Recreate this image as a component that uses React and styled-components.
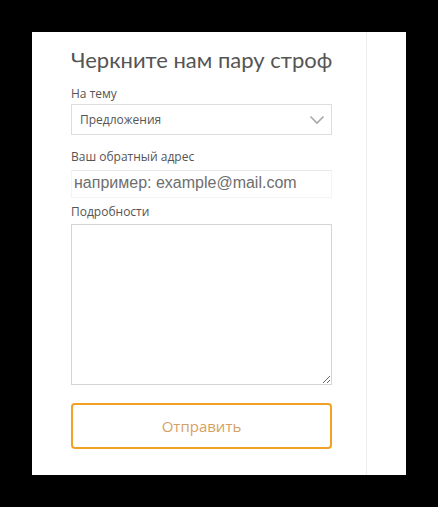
import styled, { createGlobalStyle } from "styled-components";

const GlobalStyle = createGlobalStyle`
  html, body {
    margin: 0;
    padding: 0;
    background: #000000;
  }
  body {
    width: 438px;
    height: 507px;
    overflow: hidden;
  }
`;

const Panel = styled.div`
  margin: 32px 0 0 32px;
  width: 374px;
  height: 443px;
  background: #ffffff;
  display: flex;
`;

const FormColumn = styled.form`
  width: 335px;
  box-sizing: border-box;
  padding: 15px 0 0 39px;
  border-right: 1px solid #eeeeee;
  display: flex;
  flex-direction: column;
  font-family: "Open Sans", "Noto Sans", sans-serif;
`;

const Title = styled.h2`
  margin: 0;
  font-family: Lato, "Open Sans", sans-serif;
  font-size: 22px;
  line-height: 26px;
  font-weight: 400;
  color: #555555;
  white-space: nowrap;
`;

const Label = styled.label`
  display: block;
  font-size: 12px;
  line-height: 16px;
  color: #555555;
  margin-top: ${(p) => p.$top || 0}px;
  margin-bottom: ${(p) => p.$bottom || 4}px;
`;

const Field = styled.div`
  width: 261px;
`;

const Select = styled.div`
  box-sizing: border-box;
  height: 31px;
  border: 1px solid #dddddd;
  display: flex;
  align-items: center;
  justify-content: space-between;
  padding: 0 6px 0 8px;
  font-size: 12px;
  color: #555555;
`;

const EmailInput = styled.input`
  box-sizing: border-box;
  width: 100%;
  height: 28px;
  border: 1px solid #f4f4f4;
  border-top-color: #e8e8e8;
  padding: 0 2px 2px;
  outline: none;
  font-family: "Liberation Sans", Arial, sans-serif;
  font-size: 16px;
  color: #666666;
  background: #ffffff;

  &::placeholder {
    color: #6e6e6e;
  }
`;

const TextArea = styled.textarea`
  display: block;
  box-sizing: border-box;
  width: 100%;
  height: 161px;
  margin: 0;
  border: 1px solid #d4d4d4;
  resize: vertical;
  outline: none;
  font-family: "Open Sans", sans-serif;
  font-size: 12px;
`;

const SubmitButton = styled.button`
  margin-top: 18px;
  width: 261px;
  height: 46px;
  box-sizing: border-box;
  border: 2px solid #f1a226;
  border-radius: 4px;
  background: #ffffff;
  font-family: "Open Sans", sans-serif;
  font-size: 15px;
  color: #d89f62;
  cursor: pointer;
`;

const Chevron = () => (
  <svg width="16" height="10" viewBox="0 0 16 10" fill="none">
    <path d="M1.5 1.5 L8 8 L14.5 1.5" stroke="#a8a8a8" strokeWidth="1.6" />
  </svg>
);

export default function App() {
  return (
    <>
      <GlobalStyle />
      <Panel>
        <FormColumn onSubmit={(e) => e.preventDefault()}>
          <Title>Черкните нам пару строф</Title>
          <Field>
            <Label $top={13} $bottom={2}>На тему</Label>
            <Select>
              <span>Предложения</span>
              <Chevron />
            </Select>
          </Field>
          <Field>
            <Label $top={14} $bottom={5}>Ваш обратный адрес</Label>
            <EmailInput placeholder="например: example@mail.com" />
          </Field>
          <Field>
            <Label $top={6} $bottom={4}>Подробности</Label>
            <TextArea />
          </Field>
          <SubmitButton type="submit">Отправить</SubmitButton>
        </FormColumn>
      </Panel>
    </>
  );
}
